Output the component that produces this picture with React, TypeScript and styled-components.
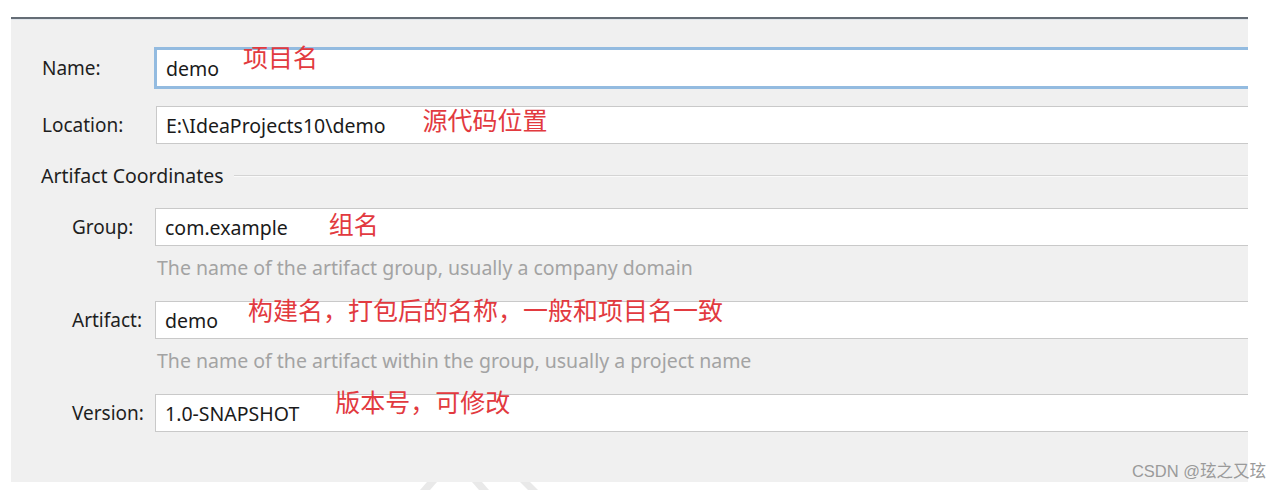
import styled, { createGlobalStyle } from 'styled-components';

const GlobalStyle = createGlobalStyle`
  html, body {
    margin: 0;
    padding: 0;
    background: #ffffff;
  }
  body {
    font-family: 'Noto Sans', 'Open Sans', sans-serif;
  }
`;

const Page = styled.div`
  position: relative;
  box-sizing: border-box;
  width: 1282px;
  height: 490px;
  padding: 17px 0 0 11px;
  background: #ffffff;
  overflow: hidden;
`;

const Panel = styled.div`
  box-sizing: border-box;
  width: 1237px;
  height: 465px;
  background: #f0f0f0;
  border-top: 2px solid #656d76;
  box-shadow: inset 0 1px 0 #dfe4ea;
  padding-top: 28px;
  overflow: hidden;
  display: flex;
  flex-direction: column;
`;

const Row = styled.div<{ $indent: number; $gap: number }>`
  display: flex;
  align-items: center;
  padding-left: ${(p) => p.$indent}px;
  margin-bottom: ${(p) => p.$gap}px;
`;

const Label = styled.div<{ $width: number }>`
  flex: 0 0 ${(p) => p.$width}px;
  font-size: 19px;
  color: #1e1e1e;
  white-space: nowrap;
`;

const Field = styled.div<{ $focused?: boolean }>`
  box-sizing: border-box;
  flex: 0 0 1200px;
  height: ${(p) => (p.$focused ? 42 : 38)}px;
  display: flex;
  align-items: center;
  padding-left: 9px;
  background: #ffffff;
  border: ${(p) => (p.$focused ? '3px solid #93bbe0' : '1px solid #c9c9c9')};
  font-size: 19.5px;
  color: #1a1a1a;
  white-space: nowrap;
`;

const Note = styled.span<{ $left: number; $rise: number }>`
  position: relative;
  top: ${(p) => -p.$rise}px;
  margin-left: ${(p) => p.$left}px;
  font-family: 'Noto Sans CJK SC', sans-serif;
  font-size: 25px;
  color: #e23a3f;
`;

const Hint = styled.div`
  padding-left: 146px;
  font-size: 19.5px;
  line-height: 26px;
  color: #a3a3a3;
  margin: 9px 0 20px;
  white-space: nowrap;
`;

const Section = styled.div`
  display: flex;
  align-items: center;
  gap: 10px;
  padding-left: 30px;
  margin-bottom: 19px;
  font-size: 19.5px;
  color: #1e1e1e;
  white-space: nowrap;

  &::after {
    content: '';
    flex: 1;
    height: 1px;
    background: #d4d4d4;
    box-shadow: 0 1px 0 #fafafa;
  }
`;

const Watermark = styled.div`
  position: absolute;
  right: 16px;
  bottom: 8px;
  font-family: 'Liberation Sans', 'Noto Sans CJK SC', sans-serif;
  font-size: 16.5px;
  color: #9a9a9a;
`;

const Stripes = styled.svg`
  position: absolute;
  left: 410px;
  bottom: 0;
`;

export default function App() {
  return (
    <>
      <GlobalStyle />
      <Page>
        <Panel>
          <Row $indent={31} $gap={17}>
            <Label $width={112}>Name:</Label>
            <Field $focused>
              demo
              <Note $left={24} $rise={12}>项目名</Note>
            </Field>
          </Row>
          <Row $indent={31} $gap={18}>
            <Label $width={114}>Location:</Label>
            <Field>
              E:\IdeaProjects10\demo
              <Note $left={37} $rise={6}>源代码位置</Note>
            </Field>
          </Row>
          <Section>Artifact Coordinates</Section>
          <Row $indent={61} $gap={0}>
            <Label $width={83}>Group:</Label>
            <Field>
              com.example
              <Note $left={41} $rise={4}>组名</Note>
            </Field>
          </Row>
          <Hint>The name of the artifact group, usually a company domain</Hint>
          <Row $indent={61} $gap={0}>
            <Label $width={83}>Artifact:</Label>
            <Field>
              demo
              <Note $left={30} $rise={11}>构建名，打包后的名称，一般和项目名一致</Note>
            </Field>
          </Row>
          <Hint>The name of the artifact within the group, usually a project name</Hint>
          <Row $indent={61} $gap={0}>
            <Label $width={83}>Version:</Label>
            <Field>
              1.0-SNAPSHOT
              <Note $left={36} $rise={12}>版本号，可修改</Note>
            </Field>
          </Row>
        </Panel>
        <Stripes width="130" height="8" viewBox="0 0 130 8">
          <polygon points="10,8 17,0 27,0 20,8" fill="#e9e9e9" />
          <polygon points="62,0 72,0 79,8 69,8" fill="#e9e9e9" />
          <polygon points="110,0 120,0 128,8 118,8" fill="#e9e9e9" />
        </Stripes>
        <Watermark>CSDN @玹之又玹</Watermark>
      </Page>
    </>
  );
}
